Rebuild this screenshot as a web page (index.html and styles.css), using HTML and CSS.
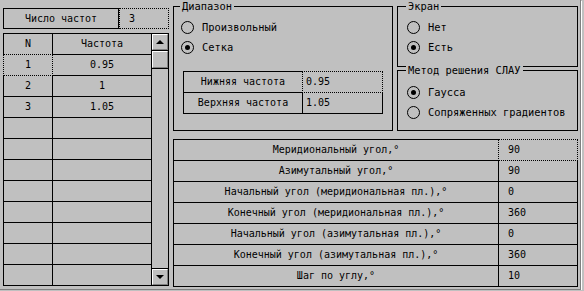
FILE: index.html
```html
<!DOCTYPE html>
<html>
<head>
<meta charset="UTF-8">
<title>Частоты и углы</title>
<link rel="stylesheet" href="styles.css">
</head>
<body>
<div class="frame">

	<div class="left">
		<div class="count">
			<div class="count-label">Число частот</div>
			<div class="count-val">3</div>
		</div>

		<div class="list">
			<div class="freq">
				<div class="cell">N</div><div class="cell">Частота</div>
				<div class="cell focus">1</div><div class="cell">0.95</div>
				<div class="cell">2</div><div class="cell">1</div>
				<div class="cell">3</div><div class="cell">1.05</div>
				<div class="cell"></div><div class="cell"></div>
				<div class="cell"></div><div class="cell"></div>
				<div class="cell"></div><div class="cell"></div>
				<div class="cell"></div><div class="cell"></div>
				<div class="cell"></div><div class="cell"></div>
				<div class="cell"></div><div class="cell"></div>
				<div class="cell"></div><div class="cell"></div>
				<div class="cell"></div><div class="cell"></div>
			</div>
			<div class="scroll">
				<div class="sb-btn sb-up"><div class="bevel"><span class="arrow-up"></span></div></div>
				<div class="sb-thumb"><div class="bevel"></div></div>
				<div class="sb-track"></div>
				<div class="sb-btn sb-down"><div class="bevel"><span class="arrow-down"></span></div></div>
			</div>
		</div>
	</div>

	<div class="right">
		<div class="top">
			<div class="group range">
				<div class="legend">Диапазон</div>
				<div class="radios">
					<div class="radio"><span class="dot"></span>Произвольный</div>
					<div class="radio"><span class="dot on"></span>Сетка</div>
				</div>
				<div class="limits">
					<div class="cell lbl">Нижняя частота</div><div class="cell val focus">0.95</div>
					<div class="cell lbl">Верхняя частота</div><div class="cell val">1.05</div>
				</div>
			</div>

			<div class="side">
				<div class="group out">
					<div class="legend">Экран</div>
					<div class="radios">
						<div class="radio"><span class="dot"></span>Нет</div>
						<div class="radio"><span class="dot on"></span>Есть</div>
					</div>
				</div>
				<div class="group method">
					<div class="legend">Метод решения СЛАУ</div>
					<div class="radios">
						<div class="radio"><span class="dot on"></span>Гаусса</div>
						<div class="radio"><span class="dot"></span>Сопряженных градиентов</div>
					</div>
				</div>
			</div>
		</div>

		<div class="angles">
			<div class="cell lbl">Меридиональный угол,°</div><div class="cell val focus">90</div>
			<div class="cell lbl">Азимутальный угол,°</div><div class="cell val">90</div>
			<div class="cell lbl">Начальный угол (меридиональная пл.),°</div><div class="cell val">0</div>
			<div class="cell lbl">Конечный угол (меридиональная пл.),°</div><div class="cell val">360</div>
			<div class="cell lbl">Начальный угол (азимутальная пл.),°</div><div class="cell val">0</div>
			<div class="cell lbl">Конечный угол (азимутальная пл.),°</div><div class="cell val">360</div>
			<div class="cell lbl">Шаг по углу,°</div><div class="cell val">10</div>
		</div>
	</div>

</div>
</body>
</html>
```

FILE: styles.css
```css
* { box-sizing: border-box; }

body {
	margin: 0;
	background-color: #c0c0c0;
	color: #000;
	font-family: "DejaVu Sans Mono", "Liberation Mono", monospace;
	font-size: 10px;
}

.frame {
	display: flex;
	gap: 4px;
	width: 581px;
	height: 290px;
	padding-left: 3px;
	border-right: 1px solid #808080;
	border-bottom: 1px solid #808080;
	box-shadow: 1px 1px 0 #fff;
}

/* left column */
.left { width: 166px; padding-top: 8px; }

.count { display: flex; height: 21px; }
.count-label {
	width: 116px;
	border: 1px solid #000;
	line-height: 19px;
	text-align: center;
}
.count-val {
	flex: 1;
	border: 1px dotted #000;
	line-height: 19px;
	padding-left: 9px;
}

.list { display: flex; margin-top: 4px; }

.cell {
	height: 21px;
	line-height: 20px;
	border-right: 1px solid #000;
	border-bottom: 1px solid #000;
	white-space: nowrap;
}

.focus {
	margin: -1px 0 0 -1px;
	border: 1px dotted #000;
	background-color: #c0c0c0;
	line-height: 19px;
	height: 22px;
}

.freq {
	display: grid;
	grid-template-columns: 49px 99px;
	width: 149px;
	border-left: 1px solid #000;
	border-top: 1px solid #000;
	text-align: center;
}

.scroll {
	display: flex;
	flex-direction: column;
	width: 17px;
	height: 253px;
	border-top: 1px solid #000;
	border-right: 1px solid #000;
	border-bottom: 1px solid #000;
}
.sb-btn { height: 17px; }
.sb-up { border-bottom: 1px solid #000; }
.sb-down { border-top: 1px solid #000; }
.sb-thumb { height: 18px; border-bottom: 1px solid #000; }
.sb-track { flex: 1; }

.bevel {
	display: flex;
	align-items: center;
	justify-content: center;
	height: 100%;
	border: 1px solid;
	border-color: #fff #808080 #808080 #fff;
}

.arrow-up, .arrow-down {
	width: 0;
	height: 0;
	border-left: 4px solid transparent;
	border-right: 4px solid transparent;
}
.arrow-up { border-bottom: 4px solid #000; }
.arrow-down { border-top: 4px solid #000; }

/* right side */
.right { width: 405px; padding-top: 6px; }

.top { display: flex; gap: 4px; }
.side { display: flex; flex-direction: column; gap: 3px; width: 181px; }

.group { border: 1px solid #000; }
.range { width: 220px; height: 125px; }
.out, .method { height: 61px; }

.legend {
	display: table;
	margin: -7px 0 0 6px;
	padding: 0 2px;
	line-height: 13px;
	background-color: #c0c0c0;
	font-size: 10.4px;
}
.out .legend, .method .legend { margin-left: 8px; }

.radios { padding: 4px 0 0 7px; }
.out .radios, .method .radios { padding-left: 9px; }
.method .radios { padding-top: 5px; }

.radio {
	display: flex;
	align-items: center;
	gap: 8px;
	height: 20px;
	font-size: 10.4px;
}

.dot {
	display: flex;
	align-items: center;
	justify-content: center;
	width: 13px;
	height: 13px;
	border: 1px solid #000;
	border-radius: 50%;
}
.dot.on::after {
	content: "";
	width: 5px;
	height: 5px;
	border-radius: 50%;
	background-color: #000;
}

.limits {
	display: grid;
	grid-template-columns: 119px 80px;
	width: 200px;
	margin: 14px 0 0 9px;
	border-left: 1px solid #000;
	border-top: 1px solid #000;
}
.limits .lbl { text-align: center; }
.limits .val { padding-left: 3px; }

.angles {
	display: grid;
	grid-template-columns: 325px 79px;
	width: 405px;
	margin-top: 8px;
	border-left: 1px solid #000;
	border-top: 1px solid #000;
}
.angles .lbl { text-align: center; }
.angles .val { padding-left: 9px; }
```
